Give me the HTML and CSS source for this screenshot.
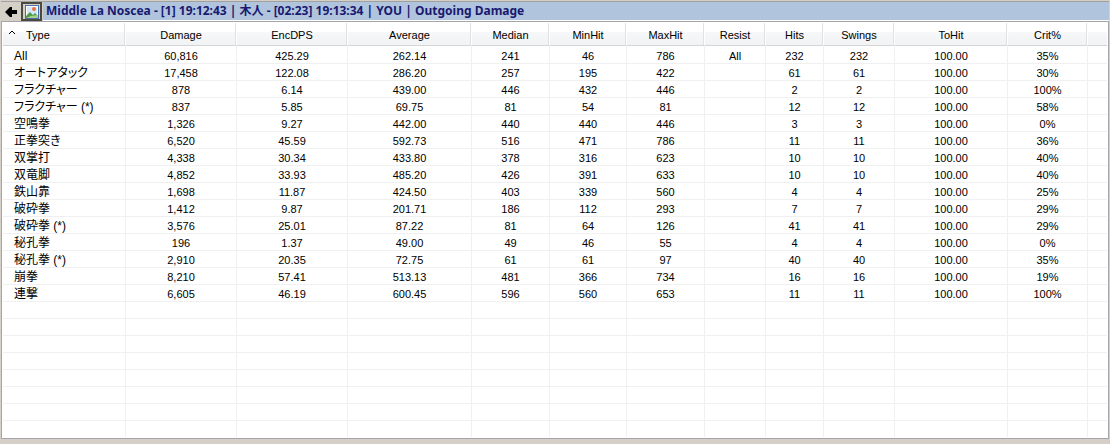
FILE: index.html
```html
<!DOCTYPE html>
<html lang="ja">
<head>
  <meta charset="UTF-8">
  <title>Outgoing Damage</title>
  <link rel="stylesheet" href="styles.css">
</head>
<body>
  <header class="toolbar">
    <button class="tool-button" type="button" aria-label="Back">
      <svg width="12" height="10" viewBox="0 0 12 10" fill="#000">
        <path d="M0 5l5-5h2v3h5v4H7v3H5z"/>
      </svg>
    </button>
    <button class="tool-button framed" type="button" aria-label="Graph">
      <svg width="14" height="14" viewBox="0 0 14 14">
        <rect width="14" height="14" fill="#4a6fae"/>
        <rect x="1" y="1" width="12" height="12" fill="#fff"/>
        <rect x="2" y="2" width="10" height="8" fill="#d3e6fb"/>
        <circle cx="9" cy="4" r="2" fill="#e8743c"/>
        <path d="M1 11l4-4 3 3 2-2 3 3v2H1z" fill="#4f9a48"/>
        <path d="M1 13l5-2 7-1v3z" fill="#a8d08c"/>
      </svg>
    </button>
    <h1 class="caption">Middle La Noscea - [1] 19:12:43 | 木人 - [02:23] 19:13:34 | YOU | Outgoing Damage</h1>
  </header>

  <main class="list-view">
    <table class="grid">
      <colgroup>
        <col class="w-type"><col class="w-damage"><col class="w-dps"><col class="w-average">
        <col class="w-median"><col class="w-minhit"><col class="w-maxhit"><col class="w-resist">
        <col class="w-hits"><col class="w-swings"><col class="w-tohit"><col class="w-crit"><col>
      </colgroup>
      <thead>
        <tr>
          <th><svg class="sort" width="6" height="4" viewBox="0 0 6 4" fill="none" stroke="#000"><path d="M0 4l3-3 3 3"/></svg>Type</th>
          <th>Damage</th><th>EncDPS</th><th>Average</th><th>Median</th><th>MinHit</th><th>MaxHit</th>
          <th>Resist</th><th>Hits</th><th>Swings</th><th>ToHit</th><th>Crit%</th><td></td>
        </tr>
      </thead>
      <tbody>
        <tr><td>All</td><td>60,816</td><td>425.29</td><td>262.14</td><td>241</td><td>46</td><td>786</td><td>All</td><td>232</td><td>232</td><td>100.00</td><td>35%</td><td></td></tr>
        <tr><td>オートアタック</td><td>17,458</td><td>122.08</td><td>286.20</td><td>257</td><td>195</td><td>422</td><td></td><td>61</td><td>61</td><td>100.00</td><td>30%</td><td></td></tr>
        <tr><td>フラクチャー</td><td>878</td><td>6.14</td><td>439.00</td><td>446</td><td>432</td><td>446</td><td></td><td>2</td><td>2</td><td>100.00</td><td>100%</td><td></td></tr>
        <tr><td>フラクチャー (*)</td><td>837</td><td>5.85</td><td>69.75</td><td>81</td><td>54</td><td>81</td><td></td><td>12</td><td>12</td><td>100.00</td><td>58%</td><td></td></tr>
        <tr><td>空鳴拳</td><td>1,326</td><td>9.27</td><td>442.00</td><td>440</td><td>440</td><td>446</td><td></td><td>3</td><td>3</td><td>100.00</td><td>0%</td><td></td></tr>
        <tr><td>正拳突き</td><td>6,520</td><td>45.59</td><td>592.73</td><td>516</td><td>471</td><td>786</td><td></td><td>11</td><td>11</td><td>100.00</td><td>36%</td><td></td></tr>
        <tr><td>双掌打</td><td>4,338</td><td>30.34</td><td>433.80</td><td>378</td><td>316</td><td>623</td><td></td><td>10</td><td>10</td><td>100.00</td><td>40%</td><td></td></tr>
        <tr><td>双竜脚</td><td>4,852</td><td>33.93</td><td>485.20</td><td>426</td><td>391</td><td>633</td><td></td><td>10</td><td>10</td><td>100.00</td><td>40%</td><td></td></tr>
        <tr><td>鉄山靠</td><td>1,698</td><td>11.87</td><td>424.50</td><td>403</td><td>339</td><td>560</td><td></td><td>4</td><td>4</td><td>100.00</td><td>25%</td><td></td></tr>
        <tr><td>破砕拳</td><td>1,412</td><td>9.87</td><td>201.71</td><td>186</td><td>112</td><td>293</td><td></td><td>7</td><td>7</td><td>100.00</td><td>29%</td><td></td></tr>
        <tr><td>破砕拳 (*)</td><td>3,576</td><td>25.01</td><td>87.22</td><td>81</td><td>64</td><td>126</td><td></td><td>41</td><td>41</td><td>100.00</td><td>29%</td><td></td></tr>
        <tr><td>秘孔拳</td><td>196</td><td>1.37</td><td>49.00</td><td>49</td><td>46</td><td>55</td><td></td><td>4</td><td>4</td><td>100.00</td><td>0%</td><td></td></tr>
        <tr><td>秘孔拳 (*)</td><td>2,910</td><td>20.35</td><td>72.75</td><td>61</td><td>61</td><td>97</td><td></td><td>40</td><td>40</td><td>100.00</td><td>35%</td><td></td></tr>
        <tr><td>崩拳</td><td>8,210</td><td>57.41</td><td>513.13</td><td>481</td><td>366</td><td>734</td><td></td><td>16</td><td>16</td><td>100.00</td><td>19%</td><td></td></tr>
        <tr><td>連撃</td><td>6,605</td><td>46.19</td><td>600.45</td><td>596</td><td>560</td><td>653</td><td></td><td>11</td><td>11</td><td>100.00</td><td>100%</td><td></td></tr>
        <tr><td></td><td></td><td></td><td></td><td></td><td></td><td></td><td></td><td></td><td></td><td></td><td></td><td></td></tr>
        <tr><td></td><td></td><td></td><td></td><td></td><td></td><td></td><td></td><td></td><td></td><td></td><td></td><td></td></tr>
        <tr><td></td><td></td><td></td><td></td><td></td><td></td><td></td><td></td><td></td><td></td><td></td><td></td><td></td></tr>
        <tr><td></td><td></td><td></td><td></td><td></td><td></td><td></td><td></td><td></td><td></td><td></td><td></td><td></td></tr>
        <tr><td></td><td></td><td></td><td></td><td></td><td></td><td></td><td></td><td></td><td></td><td></td><td></td><td></td></tr>
        <tr><td></td><td></td><td></td><td></td><td></td><td></td><td></td><td></td><td></td><td></td><td></td><td></td><td></td></tr>
        <tr><td></td><td></td><td></td><td></td><td></td><td></td><td></td><td></td><td></td><td></td><td></td><td></td><td></td></tr>
        <tr><td></td><td></td><td></td><td></td><td></td><td></td><td></td><td></td><td></td><td></td><td></td><td></td><td></td></tr>
      </tbody>
    </table>
  </main>
</body>
</html>
```
FILE: styles.css
```css
:root {
  --face: #d4d0c8;
  --border: #a5a5ab;
  --line: #f0f0f0;
}

* {
  box-sizing: border-box;
}

body {
  margin: 0;
  padding: 1px 1px 5px;
  background: var(--face);
  color: #000;
  font-family: "Liberation Sans", "Noto Sans CJK JP", sans-serif;
  font-size: 11px;
}

.toolbar {
  display: flex;
  height: 20px;
  border-top: 1px solid #a0a0a0;
}

.tool-button {
  display: flex;
  align-items: center;
  justify-content: center;
  width: 20px;
  height: 19px;
  padding: 0;
  border: 0;
  background: var(--face);
}

.tool-button.framed {
  width: 21px;
  border: 2px solid #4b4a40;
}

.caption {
  flex: 1;
  margin: 0 0 0 1px;
  padding-left: 3px;
  border-bottom: 1px solid #fff;
  background: #b0c4de;
  color: #191970;
  font-family: "Noto Sans", "Noto Sans CJK JP", sans-serif;
  font-size: 12px;
  font-weight: bold;
  line-height: 18px;
  white-space: nowrap;
  overflow: hidden;
}

.list-view {
  padding: 1px;
  border: 1px solid var(--border);
  background: #fff;
}

.grid {
  width: 100%;
  border-collapse: separate;
  border-spacing: 0;
  table-layout: fixed;
}

.w-type { width: 123px; }
.w-damage, .w-dps { width: 111px; }
.w-average { width: 124px; }
.w-median, .w-maxhit { width: 78px; }
.w-minhit { width: 77px; }
.w-resist { width: 61px; }
.w-hits { width: 58px; }
.w-swings { width: 71px; }
.w-tohit { width: 113px; }
.w-crit { width: 80px; }

th,
td {
  padding: 0;
  text-align: center;
  white-space: nowrap;
  overflow: hidden;
}

thead th,
thead td {
  height: 23px;
  padding-top: 2px;
  border-bottom: 1px solid #d5d5d5;
  background: linear-gradient(#fff 40%, #f7f8fa 40%, #f1f2f4);
  font-weight: normal;
  line-height: 20px;
}

thead th {
  border-right: 1px solid #fff;
  box-shadow: inset -1px 0 #e0e1e3;
}

thead th:first-child {
  padding-left: 6px;
  text-align: left;
}

.sort {
  margin-right: 11px;
  vertical-align: 5px;
}

tbody td {
  height: 17px;
  padding-top: 2px;
  border-right: 1px solid var(--line);
  border-bottom: 1px solid var(--line);
  line-height: 14px;
}

tbody tr:first-child td {
  height: 18px;
  padding-top: 3px;
}

tbody td:first-child {
  padding-left: 11px;
  font-size: 12px;
  font-feature-settings: "palt";
  text-align: left;
}

tbody td:last-child {
  border-right: 0;
}

tbody tr:last-child td {
  height: 16px;
  border-bottom: 0;
}
```
